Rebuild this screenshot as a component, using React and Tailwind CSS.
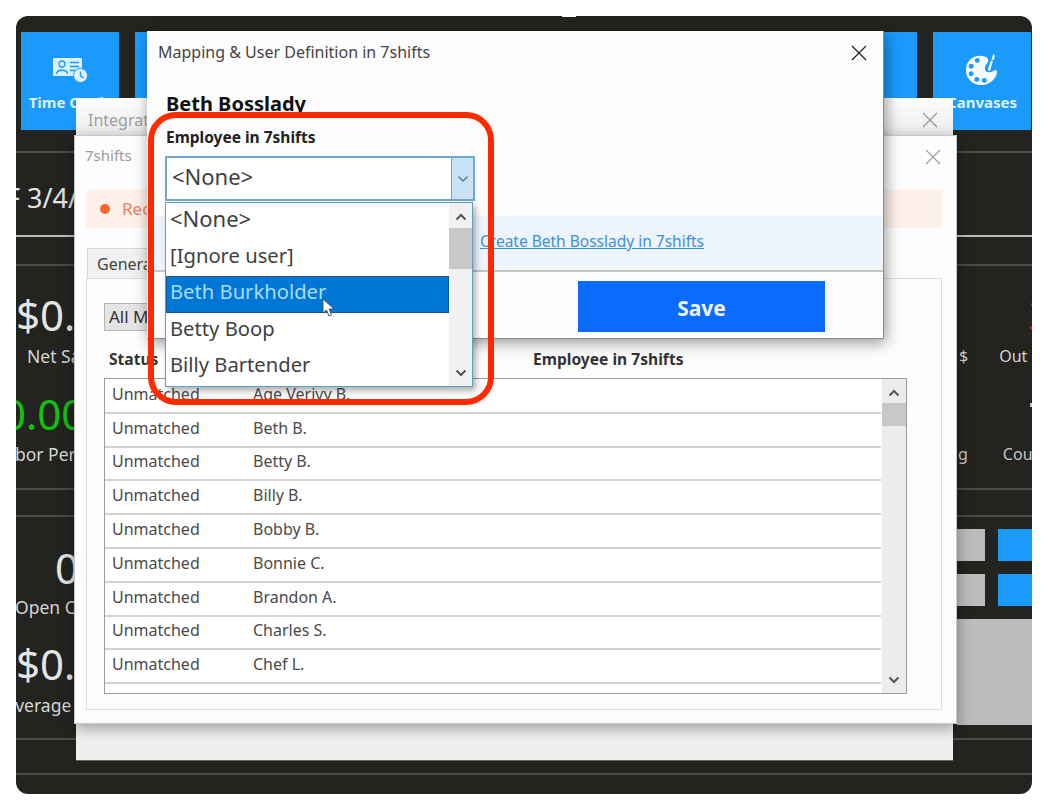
const FONT = { fontFamily: '"Noto Sans", "Open Sans", sans-serif' };

function CloseX({ className, sw = 1.3 }) {
  return (
    <svg width="16" height="16" viewBox="0 0 16 16" className={className} fill="none" stroke="currentColor" strokeWidth={sw}>
      <path d="M1 1 L15 15 M15 1 L1 15" />
    </svg>
  );
}

function Chevron({ up, className, sw = 2 }) {
  return (
    <svg width="12" height="8" viewBox="0 0 12 8" className={className} fill="none" stroke="currentColor" strokeWidth={sw}>
      <path d={up ? "M1.5 6.5 L6 2 L10.5 6.5" : "M1.5 1.5 L6 6 L10.5 1.5"} />
    </svg>
  );
}

function TimeCardIcon() {
  return (
    <svg width="35" height="25" viewBox="0 0 35 25">
      <rect x="0" y="0" width="29" height="18" rx="1" fill="#d9eefe" />
      <circle cx="9" cy="6" r="3" fill="none" stroke="#1a9bfc" strokeWidth="1.3" />
      <path d="M3.5 16 C4 11 14 11 14.5 16" fill="none" stroke="#1a9bfc" strokeWidth="1.3" />
      <path d="M17 4.5 H26 M17 8.5 H26 M17 12.5 H22" stroke="#1a9bfc" strokeWidth="1.3" />
      <circle cx="27.5" cy="17.5" r="7" fill="#e4f3ff" stroke="#1a9bfc" strokeWidth="1" />
      <path d="M27.5 13.5 V18 L31 20" fill="none" stroke="#1a9bfc" strokeWidth="1.3" />
    </svg>
  );
}

function PaletteIcon() {
  return (
    <svg width="34" height="34" viewBox="0 0 36 36">
      <path d="M16 3 C7 3 1 10 1 18 C1 27 8 34 17 34 C25 34 33 28 34 20 C34 18 32 17 30 19 C27 21 24 21 22 19 C20 16 22 12 24 10 C26 8 24 3 16 3 Z" fill="#f4faff" />
      <circle cx="13" cy="8" r="2.6" fill="#1a9bfc" />
      <circle cx="6.5" cy="14" r="2.6" fill="#1a9bfc" />
      <circle cx="6.5" cy="22" r="2.6" fill="#1a9bfc" />
      <circle cx="12.5" cy="28" r="2.6" fill="#1a9bfc" />
      <circle cx="20.5" cy="29" r="2.6" fill="#1a9bfc" />
      <path d="M24 18 L27.5 8 L29.5 8.7 L26.5 19 Z" fill="#f4faff" />
      <path d="M28 7 L30 0.5 L31.5 3 L30.5 7.7 Z" fill="#f4faff" />
    </svg>
  );
}

function CursorIcon({ className }) {
  return (
    <svg width="13" height="20" viewBox="0 0 13 20" className={className}>
      <path d="M1 1 V15 L4.5 12 L7 18 L9.5 17 L7 11 H12 Z" fill="#fff" stroke="#555" strokeWidth="1" />
    </svg>
  );
}

const tileIndexes = [0, 1, 2, 3, 4, 5, 6, 7, 8];

function Tile({ i }) {
  return (
    <div className="flex h-[98px] w-[98px] shrink-0 flex-col items-center bg-[#1a9bfc] text-white">
      <div className="mt-[20px] flex h-[36px] items-center">
        {i === 0 && <TimeCardIcon />}
        {i === 8 && <PaletteIcon />}
      </div>
      <div className="mt-[3px] text-[15px] leading-[22px] font-bold whitespace-nowrap text-[#dff1ff]">
        {i === 0 ? "Time Cards" : i === 8 ? "Canvases" : i === 7 ? "Reports" : ""}
      </div>
    </div>
  );
}

function StatBig({ children, color = "text-[#e4e6e6]", ml = "ml-0" }) {
  return <div className={`text-[42px] leading-[44px] whitespace-nowrap ${color} ${ml}`}>{children}</div>;
}

function StatLabel({ children, ml }) {
  return <div className={`text-[17.5px] leading-[24px] whitespace-nowrap text-[#d3d5d3] ${ml}`}>{children}</div>;
}

function Dashboard() {
  return (
    <div className="flex h-full flex-col">
      <div className="flex gap-[16px] px-[5px] pt-[16px]">
        {tileIndexes.map((i) => (
          <Tile key={i} i={i} />
        ))}
      </div>
      <div className="mt-[21px] h-[2px] bg-[#4a4a48]" />
      <div className="flex h-[82px] items-center">
        <div className="ml-[-10px] pt-[8px] text-[27px] leading-[36px] whitespace-nowrap text-[#e2e4e4]">F 3/4/2021</div>
      </div>
      <div className="h-[2px] bg-[#bdbdbb]" />
      <div className="h-[27px]" />
      <div className="h-[2px] bg-[#4a4a48]" />
      <div className="flex h-[222px] flex-col overflow-hidden">
        <div className="mt-[27px] flex h-[44px] items-center justify-between">
          <StatBig>$0.00</StatBig>
          <div className="w-[82px] pl-[78px] text-[42px] leading-[44px] whitespace-nowrap text-[#e01010]">3</div>
        </div>
        <div className="mt-[7px] flex h-[24px] items-center justify-between">
          <StatLabel ml="ml-[11px]">Net Sales</StatLabel>
          <div className="flex w-[82px] gap-[31px] pl-[9px] text-[16px] leading-[24px] text-[#d3d5d3]">
            <span>$</span>
            <span>Out</span>
          </div>
        </div>
        <div className="mt-[24px] flex h-[44px] items-center justify-between">
          <StatBig color="text-[#0fc40f]" ml="ml-[-14px]">
            0.00%
          </StatBig>
          <div className="mb-[18px] w-[82px] pl-[80px]">
            <div className="h-[4px] w-[2px] bg-[#c8ccd8]" />
          </div>
        </div>
        <div className="mt-[6px] flex h-[24px] items-center justify-between">
          <StatLabel ml="ml-[-20px]">Labor Percent</StatLabel>
          <div className="flex w-[82px] gap-[35px] pl-[8px] text-[16px] leading-[24px] text-[#c4c6c4]">
            <span>g</span>
            <span>Count</span>
          </div>
        </div>
      </div>
      <div className="h-[2px] bg-[#4a4a48]" />
      <div className="h-[25px]" />
      <div className="h-[2px] bg-[#4a4a48]" />
      <div className="flex h-[221px] justify-between overflow-hidden">
        <div className="flex flex-col">
          <StatBig ml="ml-[39px] mt-[29px]">0</StatBig>
          <div className="mt-[5px]">
            <StatLabel ml="ml-[-1px]">Open Checks</StatLabel>
          </div>
          <StatBig ml="ml-0 mt-[23px]">$0.00</StatBig>
          <div className="mt-[7px]">
            <StatLabel ml="ml-[-12px]">Average Check</StatLabel>
          </div>
        </div>
        <div className="flex w-[75px] flex-col">
          <div className="mt-[12px] flex h-[32px] gap-[13px]">
            <div className="w-[28px] bg-[#bcbcbc]" />
            <div className="flex-1 bg-[#1a9bfc]" />
          </div>
          <div className="mt-[13px] flex h-[32px] gap-[13px]">
            <div className="w-[28px] bg-[#bcbcbc]" />
            <div className="flex-1 bg-[#1a9bfc]" />
          </div>
          <div className="mt-[13px] h-[106px] bg-[#bcbcbc]" />
        </div>
      </div>
      <div className="h-[2px] bg-[#4a4a48]" />
      <div className="h-[33px]" />
      <div className="h-[2px] bg-[#4a4a48]" />
    </div>
  );
}

const rows = [
  "Age Verivy B.",
  "Beth B.",
  "Betty B.",
  "Billy B.",
  "Bobby B.",
  "Bonnie C.",
  "Brandon A.",
  "Charles S.",
  "Chef L.",
];

function MatchList() {
  return (
    <div className="flex h-[316px] w-[803px] border border-[#9a9a9a] bg-white">
      <div className="w-[776px] pt-[1px]">
        {rows.map((name) => (
          <div key={name} className="flex h-[33.8px] items-center border-b-2 border-[#d2d2d2] pb-[4px] pl-[7px] text-[16px] text-[#4a4a4a]">
            <span className="w-[141px]">Unmatched</span>
            <span>{name}</span>
          </div>
        ))}
      </div>
      <div className="ml-[1px] flex w-[24px] flex-col items-center bg-[#ececec] text-[#555]">
        <Chevron up className="mt-[10px]" />
        <div className="mt-[6px] h-[23px] w-full bg-[#c8c8c8]" />
        <div className="flex-1" />
        <Chevron className="mb-[9px]" />
      </div>
    </div>
  );
}

function IntegrationWindow() {
  return (
    <div className="absolute top-[82px] left-[60px] h-[663px] w-[877px] border-b border-[#666] bg-[#efefef]">
      <div className="flex h-[36px] items-center justify-between bg-gradient-to-b from-[#fdfdfd] to-[#ededed] pt-[7px] pr-[15px] pl-[12px]">
        <span className="text-[16px] text-[#a0a0a0]">Integrations</span>
        <CloseX className="text-[#9a9a9a]" />
      </div>
    </div>
  );
}

function SevenShiftsWindow() {
  return (
    <div className="absolute top-[119px] left-[58px] h-[589px] w-[883px] border border-[#c8c8c8] bg-[#fdfdfd] shadow-[0_4px_14px_rgba(0,0,0,0.35)]">
      <div className="flex h-[41px] items-center justify-between pr-[15px] pl-[10px]">
        <span className="pb-[3px] text-[15px] text-[#9a9a9a]">7shifts</span>
        <CloseX className="text-[#a0a0a0]" />
      </div>
      <div className="mx-[11px] mt-[13px] flex h-[38px] w-[856px] items-center bg-[#fdf1ea] pl-[14px] text-[17px] text-[#f0815a]">
        <span className="h-[10px] w-[10px] rounded-full bg-[#f9652f]" />
        <span className="ml-[12px]">Recommended</span>
      </div>
      <div className="mt-[20px] ml-[12px] flex h-[30px] w-[90px] items-center border border-b-0 border-[#d8d8d8] bg-[#f1f1f1] pl-[9px] text-[16px] text-[#444]">
        General
      </div>
      <div className="mx-[11px] h-[432px] w-[856px] border border-[#dcdcdc] bg-[#fdfdfd] pl-[17px]">
        <div className="mt-[24px] flex h-[28px] w-[110px] items-center border border-[#b4b4b4] bg-[#e4e4e4] pl-[4px] text-[17px] text-[#333]">
          All Mappings
        </div>
        <div className="mt-[16px] flex h-[24px] items-center pt-[2px] text-[15.6px] font-bold text-[#333]">
          <span className="ml-[5px] w-[424px]">Status</span>
          <span>Employee in 7shifts</span>
        </div>
        <div className="mt-[7px]">
          <MatchList />
        </div>
      </div>
    </div>
  );
}

const options = ["<None>", "[Ignore user]", "Beth Burkholder", "Betty Boop", "Billy Bartender"];

function Dropdown() {
  return (
    <div className="absolute top-[171px] left-[18px] z-10 flex h-[185px] w-[308px] border border-[#5f9fc6] bg-white shadow-[3px_4px_6px_rgba(0,0,0,0.3)]">
      <div className="w-[283px]">
        {options.map((o, i) =>
          i === 2 ? (
            <div key={o} className="relative flex h-[36.5px] items-center border border-dotted border-[#1a3a5a] bg-[#0076d6] pb-[6px] pl-[3px] text-[20.2px] text-[#a9dcfb]">
              {o}
              <CursorIcon className="absolute top-[21px] left-[155px]" />
            </div>
          ) : (
            <div key={o} className={`flex h-[36.5px] items-center pb-[6px] pl-[4px] text-[#3f3f3f] ${i === 0 ? "text-[22px]" : "text-[20.2px]"}`}>
              {o}
            </div>
          )
        )}
      </div>
      <div className="flex flex-1 flex-col items-center bg-[#f1f1f1] text-[#555]">
        <Chevron up className="mt-[10px]" />
        <div className="mt-[7px] h-[41px] w-full bg-[#c8c8c8]" />
        <div className="flex-1" />
        <Chevron className="mb-[9px]" />
      </div>
    </div>
  );
}

function MappingWindow() {
  return (
    <div className="absolute top-[15px] left-[131px] h-[308px] w-[737px] border-r border-b border-[#8a8a8a] bg-[#fdfdfd] shadow-[2px_4px_14px_rgba(0,0,0,0.4)]">
      <div className="flex h-[43px] items-center justify-between pr-[16px] pl-[11px]">
        <span className="pb-[2px] text-[16px] text-[#454545]">Mapping &amp; User Definition in 7shifts</span>
        <CloseX className="text-[#222]" />
      </div>
      <div className="mt-[16px] ml-[19px] text-[20px] leading-[28px] font-bold text-[#111]">Beth Bosslady</div>
      <div className="mt-[9px] ml-[19px] text-[15.5px] leading-[20px] font-bold text-[#222]">Employee in 7shifts</div>
      <div className="mt-[9px] ml-[18px] flex h-[45px] w-[310px] border-2 border-[#6ea9cb] bg-white">
        <div className="flex flex-1 items-center pb-[4px] pl-[5px] text-[22px] text-[#3f3f3f]">{"<None>"}</div>
        <div className="flex w-[22px] items-center justify-center border-l border-[#6ea9cb] bg-[#c9e2f6] text-[#5a7a90]">
          <Chevron sw={1.5} />
        </div>
      </div>
      <div className="mt-[15px] flex h-[56px] items-center border-b-2 border-[#c6c6c6] bg-[#eef4fc] pb-[3px] pl-[333px]">
        <span className="text-[15.5px] text-[#3f8fdc] underline">Create Beth Bosslady in 7shifts</span>
      </div>
      <div className="mt-[9px] ml-[431px] flex h-[51px] w-[247px] items-center justify-center bg-[#0a6bfd] pt-[5px] text-[21px] font-bold text-[#eef5ff]">
        Save
      </div>
      <Dropdown />
    </div>
  );
}

export default function App() {
  return (
    <div className="h-[810px] w-[1048px] bg-white pt-[16px] pl-[16px]" style={FONT}>
      <div className="relative h-[778px] w-[1016px] overflow-hidden rounded-[12px] bg-[#232320]">
        <Dashboard />
        <IntegrationWindow />
        <SevenShiftsWindow />
        <MappingWindow />
        <div className="absolute top-0 left-[546px] h-[1px] w-[14px] bg-white" />
        <div className="absolute top-[96px] left-[132px] z-20 h-[293px] w-[346px] rounded-[28px] border-[6px] border-[#ff2a00]" />
      </div>
    </div>
  );
}
